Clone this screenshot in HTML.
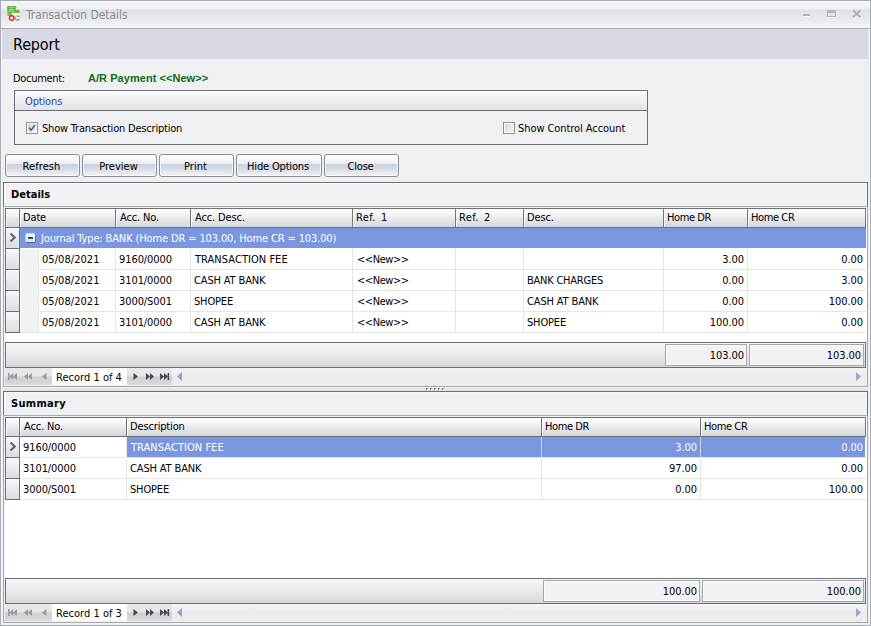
<!DOCTYPE html>
<html><head><meta charset="utf-8"><title>Transaction Details</title>
<style>
*{box-sizing:border-box;margin:0;padding:0}
html,body{width:871px;height:626px;overflow:hidden;background:#eff0f2}
body{position:relative;font-family:"DejaVu Sans Condensed","DejaVu Sans","Liberation Sans",sans-serif;font-size:11px;color:#000;line-height:13px;letter-spacing:-0.15px;font-stretch:condensed}
.a{position:absolute;white-space:pre}
.n{letter-spacing:-0.08px}
.u{letter-spacing:0.04px}
.lt{letter-spacing:-0.45px}
#win{left:0;top:0;width:871px;height:626px;border:1px solid #a9adb7;background:#eff0f2}
#title{left:1px;top:1px;width:869px;height:27px;background:linear-gradient(#f4f5f7 0,#eff0f3 28%,#dee1e6 33%,#e3e6ea 55%,#eceef1 80%,#f5f6f8 100%)}
#tline{left:1px;top:28px;width:869px;height:1px;background:#acadb0}
#ttext{left:26px;top:7px;font-size:13px;line-height:16px;color:#8b8c90;transform:scaleX(.915);transform-origin:0 0;letter-spacing:0}
#hdr{left:2px;top:29px;width:866px;height:30px;background:#d9d9e6}
#hdrt{left:13px;top:35px;font-size:16px;line-height:20px;color:#000;letter-spacing:-0.15px}
#doc{left:88px;top:72px;font-family:"Liberation Sans",sans-serif;font-weight:bold;color:#126a12;letter-spacing:0.05px}
#grp{left:14px;top:90px;width:634px;height:55px;border:1px solid #6e6f72}
#grph{left:0;top:0;width:632px;height:20px;background:linear-gradient(#fbfbfc,#eeeff1 50%,#e2e3e7);border-bottom:1px solid #6e6f72}
.cb{width:12px;height:12px;border:1px solid #8e9094;background:#fff}
.cb i{position:absolute;left:1px;top:1px;width:8px;height:8px;background:linear-gradient(135deg,#d3d7df,#f3f4f7)}
.btn{top:154px;height:23px;border:1px solid #8a8e98;border-radius:3px;background:linear-gradient(#fefefe 0,#eceef2 41%,#cad1db 46%,#dbe0e7 72%,#f3f4f7 100%);text-align:center;line-height:23px;padding-right:2px;letter-spacing:0.1px;box-shadow:inset 0 0 0 1px rgba(255,255,255,.7)}
.pd{background:#6e7076}
.pl{background:#a9aaac}
.cap{font-weight:bold;letter-spacing:0.3px}
.white{background:#fff}
.gb{background:#6d6f74}
.hc{height:18px;background:linear-gradient(#ffffff 0,#f1f2f4 35%,#e3e4e8 65%,#d5d7db 100%);border-left:1px solid #f8f8f9;line-height:17px;padding-left:4px}
.hb{width:1px;height:18px;background:#74767b}
.ind{left:5px;width:15px;border:1px solid #6d6f74;border-top:none;background:linear-gradient(#f8f8f9,#dcdde1)}
.vl{width:1px;background:#e5e5e6}
.hl{height:1px;background:#e5e5e6}
.t{line-height:20px;height:20px}
.r{text-align:right}
.foot{border:1px solid #6d6f74;background:linear-gradient(#f7f7f9,#e9eaed 50%,#d6d8dc)}
.sum{height:22px;border:1px solid #a3a5a9;background:#f2f2f4;text-align:right;line-height:22px;padding-right:2px;box-shadow:inset 0 0 0 1px rgba(255,255,255,.8)}
.navb{height:17px;background:linear-gradient(#e9e9ea 0,#e6e6e7 48%,#cfcfd0 52%,#dadadb 100%)}
.sel{background:#7a96de;color:#fff}
</style></head><body>
<div id="win" class="a"></div>
<div class="a" style="left:1px;top:29px;width:1px;height:596px;background:#f5f5f6"></div><div class="a" style="left:869px;top:29px;width:1px;height:596px;background:#f5f5f6"></div><div class="a" style="left:868px;top:29px;width:1px;height:596px;background:#ebebed"></div>
<div id="title" class="a"></div><div id="tline" class="a"></div>
<svg class="a" style="left:7px;top:6px" width="13" height="16" viewBox="0 0 13 16">
<defs><linearGradient id="ig" x1="0" y1="0" x2="0" y2="1"><stop offset="0" stop-color="#35962f"/><stop offset=".3" stop-color="#66b43a"/><stop offset="1" stop-color="#b0dc68"/></linearGradient></defs>
<path d="M0.3 0.3H8.6L12.3 4V15.6H0.3Z" fill="url(#ig)"/>
<path d="M8.6 0.3V4H12.3Z" fill="#e4f3d3"/>
<path d="M1.4 1.6H7.6M1.4 3.5H7.6M1.4 5.4H7.6M3.4 1.2V5.6M5.6 1.2V5.6" stroke="#bfe39a" stroke-width=".7" fill="none"/>
<path d="M5 7H12.3V15.6H0.3V10H5Z" fill="#fdfdfd"/>
<circle cx="4.7" cy="12" r="2.3" fill="none" stroke="#e0222a" stroke-width="1.4"/>
<path d="M8.3 11A2.1 2.1 0 0 1 10.3 9.8" fill="none" stroke="#f6c21a" stroke-width="1.3"/>
<path d="M10.3 9.8A2.1 2.1 0 0 1 12.1 10.9" fill="none" stroke="#4f7fd6" stroke-width="1.3"/>
<path d="M8.3 11A2.1 2.1 0 0 0 9.4 13.8" fill="none" stroke="#ef7a1f" stroke-width="1.3"/>
<path d="M9.4 13.8A2.1 2.1 0 0 0 12.1 13" fill="none" stroke="#d93a3a" stroke-width="1.3"/>
</svg>
<div id="ttext" class="a">Transaction Details</div>
<svg class="a" style="left:800px;top:8px" width="66" height="12" viewBox="0 0 66 12">
<rect x="3" y="6" width="7" height="2" fill="#b1b2b5"/><rect x="3" y="8" width="7" height="1" fill="#f9f9fa"/>
<rect x="27.5" y="2.5" width="8" height="6" fill="none" stroke="#b4b5b8"/><rect x="27" y="2" width="9" height="3" fill="#b4b5b8"/><rect x="27" y="9" width="9" height="1" fill="#f9f9fa"/>
<path d="M53 3.4L60.6 10.2M60.6 3.4L53 10.2" stroke="#f7f7f9" stroke-width="2.2" fill="none"/><path d="M53 2.4L60.6 9.2M60.6 2.4L53 9.2" stroke="#b1b2b5" stroke-width="2.2" fill="none"/>
</svg>
<div id="hdr" class="a"></div><div id="hdrt" class="a">Report</div>
<div class="a" style="left:13px;top:72px;letter-spacing:-0.3px">Document:</div>
<div id="doc" class="a">A/R Payment &lt;&lt;New&gt;&gt;</div>
<div id="grp" class="a"><div id="grph" class="a"></div>
<div class="a" style="left:10px;top:4px;color:#27459e">Options</div>
<div class="a cb" style="left:11px;top:31px"><i></i><svg class="a" style="left:1px;top:1px" width="8" height="8" viewBox="0 0 8 8"><path d="M1 3.6L3.2 6.2L7 1" fill="none" stroke="#44669c" stroke-width="1.7"/></svg></div>
<div class="a" style="left:27px;top:31px;letter-spacing:-0.2px">Show Transaction Description</div>
<div class="a cb" style="left:488px;top:31px"><i></i></div>
<div class="a" style="left:503px;top:31px;letter-spacing:-0.07px">Show Control Account</div>
</div>
<div class="a btn" style="left:5px;width:75px;letter-spacing:0.1px">Refresh</div>
<div class="a btn" style="left:82px;width:75px;letter-spacing:0.03px">Preview</div>
<div class="a btn" style="left:159px;width:75px;letter-spacing:0.05px">Print</div>
<div class="a btn" style="left:236px;width:86px;letter-spacing:-0.17px">Hide Options</div>
<div class="a btn" style="left:324px;width:75px;letter-spacing:-0.2px">Close</div>
<div class="a pd" style="left:3px;top:182px;width:865px;height:1px"></div>
<div class="a pd" style="left:3px;top:182px;width:1px;height:24px"></div>
<div class="a pd" style="left:867px;top:182px;width:1px;height:24px"></div>
<div class="a" style="left:4px;top:183px;width:863px;height:23px;background:#f0f1f3;border-left:1px solid #fafafb;border-top:1px solid #fafafb"></div>
<div class="a pl" style="left:3px;top:206px;width:865px;height:1px"></div>
<div class="a pl" style="left:3px;top:206px;width:1px;height:180px"></div>
<div class="a pl" style="left:867px;top:206px;width:1px;height:180px"></div>
<div class="a pl" style="left:3px;top:386px;width:865px;height:1px"></div>
<div class="a cap" style="left:11px;top:188px;letter-spacing:0.02px">Details</div>
<div class="a white" style="left:5px;top:208px;width:862px;height:134px"></div>
<div class="a gb" style="left:5px;top:208px;width:861px;height:1px"></div>
<div class="a gb" style="left:5px;top:227px;width:861px;height:1px"></div>
<div class="a gb" style="left:5px;top:208px;width:1px;height:20px"></div>
<div class="a hc" style="left:6px;top:209px;width:13px;padding:0"></div>
<div class="a hc" style="left:20px;top:209px;width:95px;padding-left:2px;">Date</div>
<div class="a hc" style="left:116px;top:209px;width:74px;padding-left:3px;">Acc. No.</div>
<div class="a hc" style="left:191px;top:209px;width:161px;padding-left:3px;">Acc. Desc.</div>
<div class="a hc" style="left:353px;top:209px;width:102px;padding-left:2px;letter-spacing:0.35px;word-spacing:1.9px;">Ref. 1</div>
<div class="a hc" style="left:456px;top:209px;width:67px;padding-left:2px;letter-spacing:0.35px;word-spacing:1.9px;">Ref. 2</div>
<div class="a hc" style="left:524px;top:209px;width:139px;padding-left:2px;">Desc.</div>
<div class="a hc" style="left:664px;top:209px;width:83px;padding-left:2px;letter-spacing:-0.4px;">Home DR</div>
<div class="a hc" style="left:748px;top:209px;width:117px;padding-left:2px;letter-spacing:-0.4px;">Home CR</div>
<div class="a hb" style="left:19px;top:209px"></div>
<div class="a hb" style="left:115px;top:209px"></div>
<div class="a hb" style="left:190px;top:209px"></div>
<div class="a hb" style="left:352px;top:209px"></div>
<div class="a hb" style="left:455px;top:209px"></div>
<div class="a hb" style="left:523px;top:209px"></div>
<div class="a hb" style="left:663px;top:209px"></div>
<div class="a hb" style="left:747px;top:209px"></div>
<div class="a hb" style="left:865px;top:209px"></div>
<div class="a ind" style="top:228px;height:21px"></div>
<svg class="a" style="left:9px;top:232px" width="8" height="11" viewBox="0 0 8 11"><path d="M1.5 1.6L5.7 5.5L1.5 9.4" fill="none" stroke="#5d5c8c" stroke-width="2.1"/></svg>
<div class="a sel" style="left:20px;top:228px;width:846px;height:20px"></div>
<div class="a" style="left:25px;top:233px;width:11px;height:10px;border-radius:2px;background:linear-gradient(#fbfcfe,#eef1fa 45%,#d6ddf2);border:1px solid #6577ad;border-top-color:#c4cef0;border-left-color:#b4c0ea;border-bottom-color:#55679e"></div>
<div class="a" style="left:28px;top:237px;width:5px;height:2px;background:linear-gradient(#1c2a48,#53628a)"></div>
<div class="a t" style="left:41px;top:229px;color:#fff;letter-spacing:-0.13px">Journal Type: BANK (Home DR = 103.00, Home CR = 103.00)</div>
<div class="a ind" style="top:249px;height:21px"></div>
<div class="a" style="left:21px;top:249px;width:17px;height:21px;background:#f1f2f4"></div>
<div class="a vl" style="left:38px;top:249px;height:21px"></div>
<div class="a t n" style="left:42px;top:250px;letter-spacing:0.05px;">05/08/2021</div>
<div class="a vl" style="left:115px;top:249px;height:21px;"></div>
<div class="a t n" style="left:119px;top:250px;">9160/0000</div>
<div class="a vl" style="left:190px;top:249px;height:21px;"></div>
<div class="a t u" style="left:195px;top:250px;">TRANSACTION FEE</div>
<div class="a vl" style="left:352px;top:249px;height:21px;"></div>
<div class="a t lt" style="left:357px;top:250px;">&lt;&lt;New&gt;&gt;</div>
<div class="a vl" style="left:455px;top:249px;height:21px;"></div>
<div class="a vl" style="left:523px;top:249px;height:21px;"></div>
<div class="a vl" style="left:663px;top:249px;height:21px;"></div>
<div class="a t n r" style="left:664px;top:250px;width:80px;">3.00</div>
<div class="a vl" style="left:747px;top:249px;height:21px;"></div>
<div class="a t n r" style="left:748px;top:250px;width:115px;">0.00</div>
<div class="a hl" style="left:39px;top:269px;width:827px"></div>
<div class="a ind" style="top:270px;height:21px"></div>
<div class="a" style="left:21px;top:270px;width:17px;height:21px;background:#f1f2f4"></div>
<div class="a vl" style="left:38px;top:270px;height:21px"></div>
<div class="a t n" style="left:42px;top:271px;letter-spacing:0.05px;">05/08/2021</div>
<div class="a vl" style="left:115px;top:270px;height:21px;"></div>
<div class="a t n" style="left:119px;top:271px;">3101/0000</div>
<div class="a vl" style="left:190px;top:270px;height:21px;"></div>
<div class="a t u" style="left:194px;top:271px;letter-spacing:-0.14px;">CASH AT BANK</div>
<div class="a vl" style="left:352px;top:270px;height:21px;"></div>
<div class="a t lt" style="left:357px;top:271px;">&lt;&lt;New&gt;&gt;</div>
<div class="a vl" style="left:455px;top:270px;height:21px;"></div>
<div class="a vl" style="left:523px;top:270px;height:21px;"></div>
<div class="a t u" style="left:527px;top:271px;letter-spacing:-0.23px;">BANK CHARGES</div>
<div class="a vl" style="left:663px;top:270px;height:21px;"></div>
<div class="a t n r" style="left:664px;top:271px;width:80px;">0.00</div>
<div class="a vl" style="left:747px;top:270px;height:21px;"></div>
<div class="a t n r" style="left:748px;top:271px;width:115px;">3.00</div>
<div class="a hl" style="left:39px;top:290px;width:827px"></div>
<div class="a ind" style="top:291px;height:21px"></div>
<div class="a" style="left:21px;top:291px;width:17px;height:21px;background:#f1f2f4"></div>
<div class="a vl" style="left:38px;top:291px;height:21px"></div>
<div class="a t n" style="left:42px;top:292px;letter-spacing:0.05px;">05/08/2021</div>
<div class="a vl" style="left:115px;top:291px;height:21px;"></div>
<div class="a t n" style="left:119px;top:292px;">3000/S001</div>
<div class="a vl" style="left:190px;top:291px;height:21px;"></div>
<div class="a t u" style="left:194px;top:292px;letter-spacing:-0.16px;">SHOPEE</div>
<div class="a vl" style="left:352px;top:291px;height:21px;"></div>
<div class="a t lt" style="left:357px;top:292px;">&lt;&lt;New&gt;&gt;</div>
<div class="a vl" style="left:455px;top:291px;height:21px;"></div>
<div class="a vl" style="left:523px;top:291px;height:21px;"></div>
<div class="a t u" style="left:527px;top:292px;letter-spacing:-0.14px;">CASH AT BANK</div>
<div class="a vl" style="left:663px;top:291px;height:21px;"></div>
<div class="a t n r" style="left:664px;top:292px;width:80px;">0.00</div>
<div class="a vl" style="left:747px;top:291px;height:21px;"></div>
<div class="a t n r" style="left:748px;top:292px;width:115px;">100.00</div>
<div class="a hl" style="left:39px;top:311px;width:827px"></div>
<div class="a ind" style="top:312px;height:21px"></div>
<div class="a" style="left:21px;top:312px;width:17px;height:20px;background:#f1f2f4"></div>
<div class="a vl" style="left:38px;top:312px;height:21px"></div>
<div class="a t n" style="left:42px;top:313px;letter-spacing:0.05px;">05/08/2021</div>
<div class="a vl" style="left:115px;top:312px;height:21px;"></div>
<div class="a t n" style="left:119px;top:313px;">3101/0000</div>
<div class="a vl" style="left:190px;top:312px;height:21px;"></div>
<div class="a t u" style="left:194px;top:313px;letter-spacing:-0.14px;">CASH AT BANK</div>
<div class="a vl" style="left:352px;top:312px;height:21px;"></div>
<div class="a t lt" style="left:357px;top:313px;">&lt;&lt;New&gt;&gt;</div>
<div class="a vl" style="left:455px;top:312px;height:21px;"></div>
<div class="a vl" style="left:523px;top:312px;height:21px;"></div>
<div class="a t u" style="left:527px;top:313px;letter-spacing:-0.16px;">SHOPEE</div>
<div class="a vl" style="left:663px;top:312px;height:21px;"></div>
<div class="a t n r" style="left:664px;top:313px;width:80px;">100.00</div>
<div class="a vl" style="left:747px;top:312px;height:21px;"></div>
<div class="a t n r" style="left:748px;top:313px;width:115px;">0.00</div>
<div class="a hl" style="left:20px;top:332px;width:846px"></div>
<div class="a foot" style="left:5px;top:342px;width:861px;height:26px"></div>
<div class="a sum n" style="left:665px;top:344px;width:82px">103.00</div>
<div class="a sum n" style="left:749px;top:344px;width:115px">103.00</div>
<div class="a" style="left:4px;top:368px;width:863px;height:18px;background:linear-gradient(#f5f5f5,#ececec 45%,#ededed)"></div>
<div class="a navb" style="left:5px;top:368px;width:47px"></div>
<div class="a navb" style="left:127px;top:368px;width:45px"></div>
<div class="a white" style="left:52px;top:368px;width:75px;height:17px"></div>
<div class="a" style="left:56px;top:371px;letter-spacing:0.02px">Record 1 of 4</div>
<svg class="a" style="left:0;top:368px" width="871" height="17" viewBox="0 0 871 17"><rect x="8" y="5" width="1.6" height="7" fill="#9b9b9d"/><path d="M13.2 5L9.2 8.5L13.2 12ZM17 5L13 8.5L17 12Z" fill="#9b9b9d"/><path d="M28 5L24 8.5L28 12ZM32 5L28 8.5L32 12Z" fill="#9b9b9d"/><path d="M46.5 5L42 8.5L46.5 12Z" fill="#9b9b9d"/><path d="M133.5 5L138.0 8.5L133.5 12Z" fill="#444959"/><path d="M146 5L150 8.5L146 12ZM150 5L154 8.5L150 12Z" fill="#444959"/><path d="M160 5L164 8.5L160 12ZM164 5L168 8.5L164 12Z" fill="#444959"/><rect x="167.6" y="5" width="1.6" height="7" fill="#444959"/><path d="M182 4L177 8.5L182 13Z" fill="#8fa2d6"/><path d="M856 4L861 8.5L856 13Z" fill="#97a8d8"/></svg>
<div class="a" style="left:3px;top:387px;width:865px;height:4px;background:linear-gradient(#f1f1f3,#dcdde0)"></div>
<div class="a" style="left:426px;top:388px;width:2px;height:2px;background:#fff"></div><div class="a" style="left:426px;top:388px;width:1px;height:1px;background:#5f6062;box-shadow:1px 0 0 #8a8b8d,0 1px 0 #8a8b8d"></div>
<div class="a" style="left:430px;top:388px;width:2px;height:2px;background:#fff"></div><div class="a" style="left:430px;top:388px;width:1px;height:1px;background:#5f6062;box-shadow:1px 0 0 #8a8b8d,0 1px 0 #8a8b8d"></div>
<div class="a" style="left:434px;top:388px;width:2px;height:2px;background:#fff"></div><div class="a" style="left:434px;top:388px;width:1px;height:1px;background:#5f6062;box-shadow:1px 0 0 #8a8b8d,0 1px 0 #8a8b8d"></div>
<div class="a" style="left:438px;top:388px;width:2px;height:2px;background:#fff"></div><div class="a" style="left:438px;top:388px;width:1px;height:1px;background:#5f6062;box-shadow:1px 0 0 #8a8b8d,0 1px 0 #8a8b8d"></div>
<div class="a" style="left:442px;top:388px;width:2px;height:2px;background:#fff"></div><div class="a" style="left:442px;top:388px;width:1px;height:1px;background:#5f6062;box-shadow:1px 0 0 #8a8b8d,0 1px 0 #8a8b8d"></div>
<div class="a pd" style="left:3px;top:391px;width:865px;height:1px"></div>
<div class="a pd" style="left:3px;top:391px;width:1px;height:24px"></div>
<div class="a pd" style="left:867px;top:391px;width:1px;height:24px"></div>
<div class="a" style="left:4px;top:392px;width:863px;height:23px;background:#f0f1f3;border-left:1px solid #fafafb;border-top:1px solid #fafafb"></div>
<div class="a pl" style="left:3px;top:415px;width:865px;height:1px"></div>
<div class="a pl" style="left:3px;top:415px;width:1px;height:207px"></div>
<div class="a pl" style="left:867px;top:415px;width:1px;height:207px"></div>
<div class="a pl" style="left:3px;top:622px;width:865px;height:1px"></div>
<div class="a cap" style="left:11px;top:397px;letter-spacing:0.3px">Summary</div>
<div class="a white" style="left:5px;top:417px;width:862px;height:161px"></div>
<div class="a gb" style="left:5px;top:417px;width:861px;height:1px"></div>
<div class="a gb" style="left:5px;top:436px;width:861px;height:1px"></div>
<div class="a gb" style="left:5px;top:417px;width:1px;height:20px"></div>
<div class="a hc" style="left:6px;top:418px;width:13px;padding:0"></div>
<div class="a hc" style="left:20px;top:418px;width:106px;padding-left:3px;">Acc. No.</div>
<div class="a hc" style="left:127px;top:418px;width:414px;padding-left:2px;">Description</div>
<div class="a hc" style="left:542px;top:418px;width:158px;padding-left:2px;letter-spacing:-0.4px;">Home DR</div>
<div class="a hc" style="left:701px;top:418px;width:164px;padding-left:2px;letter-spacing:-0.4px;">Home CR</div>
<div class="a hb" style="left:19px;top:418px"></div>
<div class="a hb" style="left:126px;top:418px"></div>
<div class="a hb" style="left:541px;top:418px"></div>
<div class="a hb" style="left:700px;top:418px"></div>
<div class="a hb" style="left:865px;top:418px"></div>
<div class="a ind" style="top:437px;height:21px"></div>
<svg class="a" style="left:9px;top:441px" width="8" height="11" viewBox="0 0 8 11"><path d="M1.5 1.6L5.7 5.5L1.5 9.4" fill="none" stroke="#5d5c8c" stroke-width="2.1"/></svg>
<div class="a t n" style="left:23px;top:438px;">9160/0000</div>
<div class="a vl" style="left:126px;top:437px;height:21px;"></div>
<div class="a sel" style="left:127px;top:437px;width:414px;height:20px"></div>
<div class="a t u" style="left:131px;top:438px;color:#fff;">TRANSACTION FEE</div>
<div class="a vl" style="left:541px;top:437px;height:21px;background:#c9d4f2;"></div>
<div class="a sel" style="left:542px;top:437px;width:158px;height:20px"></div>
<div class="a t n r" style="left:542px;top:438px;width:155px;color:#fff;">3.00</div>
<div class="a vl" style="left:700px;top:437px;height:21px;background:#c9d4f2;"></div>
<div class="a sel" style="left:701px;top:437px;width:164px;height:20px"></div>
<div class="a t n r" style="left:701px;top:438px;width:162px;color:#fff;">0.00</div>
<div class="a hl" style="left:20px;top:457px;width:846px"></div>
<div class="a ind" style="top:458px;height:21px"></div>
<div class="a t n" style="left:23px;top:459px;">3101/0000</div>
<div class="a vl" style="left:126px;top:458px;height:21px;"></div>
<div class="a t u" style="left:130px;top:459px;letter-spacing:-0.14px;">CASH AT BANK</div>
<div class="a vl" style="left:541px;top:458px;height:21px;"></div>
<div class="a t n r" style="left:542px;top:459px;width:155px;">97.00</div>
<div class="a vl" style="left:700px;top:458px;height:21px;"></div>
<div class="a t n r" style="left:701px;top:459px;width:162px;">0.00</div>
<div class="a hl" style="left:20px;top:478px;width:846px"></div>
<div class="a ind" style="top:479px;height:21px"></div>
<div class="a t n" style="left:23px;top:480px;">3000/S001</div>
<div class="a vl" style="left:126px;top:479px;height:21px;"></div>
<div class="a t u" style="left:130px;top:480px;letter-spacing:-0.16px;">SHOPEE</div>
<div class="a vl" style="left:541px;top:479px;height:21px;"></div>
<div class="a t n r" style="left:542px;top:480px;width:155px;">0.00</div>
<div class="a vl" style="left:700px;top:479px;height:21px;"></div>
<div class="a t n r" style="left:701px;top:480px;width:162px;">100.00</div>
<div class="a hl" style="left:20px;top:499px;width:846px"></div>
<div class="a foot" style="left:5px;top:578px;width:861px;height:26px"></div>
<div class="a sum n" style="left:543px;top:580px;width:157px">100.00</div>
<div class="a sum n" style="left:702px;top:580px;width:162px">100.00</div>
<div class="a" style="left:4px;top:604px;width:863px;height:18px;background:linear-gradient(#f5f5f5,#ececec 45%,#ededed)"></div>
<div class="a navb" style="left:5px;top:604px;width:47px"></div>
<div class="a navb" style="left:127px;top:604px;width:45px"></div>
<div class="a white" style="left:52px;top:604px;width:75px;height:17px"></div>
<div class="a" style="left:56px;top:607px;letter-spacing:0.02px">Record 1 of 3</div>
<svg class="a" style="left:0;top:604px" width="871" height="17" viewBox="0 0 871 17"><rect x="8" y="5" width="1.6" height="7" fill="#9b9b9d"/><path d="M13.2 5L9.2 8.5L13.2 12ZM17 5L13 8.5L17 12Z" fill="#9b9b9d"/><path d="M28 5L24 8.5L28 12ZM32 5L28 8.5L32 12Z" fill="#9b9b9d"/><path d="M46.5 5L42 8.5L46.5 12Z" fill="#9b9b9d"/><path d="M133.5 5L138.0 8.5L133.5 12Z" fill="#444959"/><path d="M146 5L150 8.5L146 12ZM150 5L154 8.5L150 12Z" fill="#444959"/><path d="M160 5L164 8.5L160 12ZM164 5L168 8.5L164 12Z" fill="#444959"/><rect x="167.6" y="5" width="1.6" height="7" fill="#444959"/><path d="M182 4L177 8.5L182 13Z" fill="#8fa2d6"/><path d="M856 4L861 8.5L856 13Z" fill="#97a8d8"/></svg>
</body></html>
